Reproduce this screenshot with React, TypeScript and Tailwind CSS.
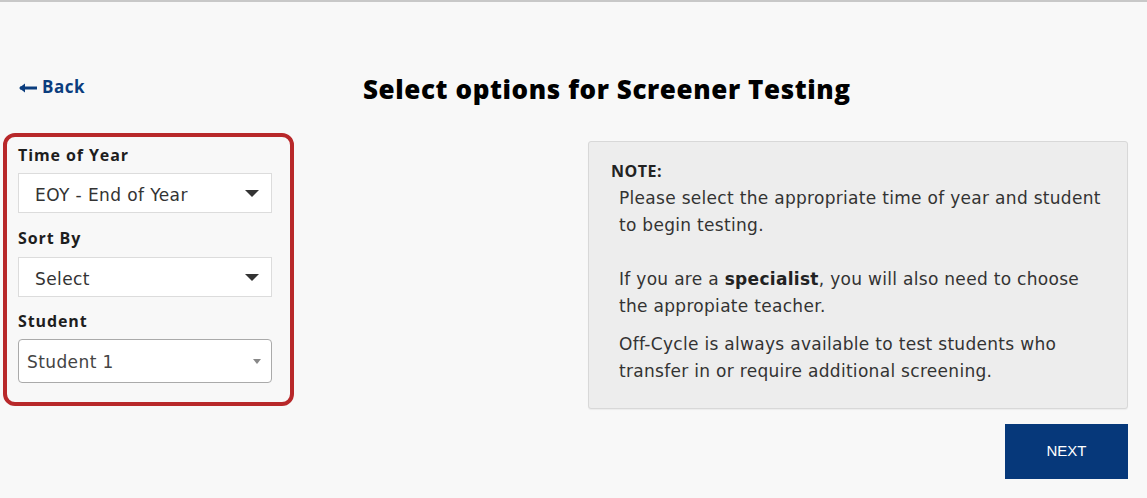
import React from "react";

const font = { fontFamily: '"Open Sans", "Noto Sans", sans-serif' };
const bodyFont = { fontFamily: '"DejaVu Sans", "Open Sans", sans-serif' };

function Caret({ small }: { small?: boolean }) {
  return small ? (
    <span className="block h-0 w-0 border-x-[4px] border-t-[5px] border-x-transparent border-t-[#888]" />
  ) : (
    <span className="block h-0 w-0 border-x-[7px] border-t-[7px] border-x-transparent border-t-[#333]" />
  );
}

export default function App() {
  return (
    <div
      className="flex h-[498px] w-[1147px] flex-col overflow-hidden border-t-2 border-[#c8c8c8] bg-[#f8f8f8] text-[#222]"
      style={font}
    >
      {/* header row */}
      <div className="mt-[68px] flex items-center">
        <a className="ml-[19px] -mt-[5px] flex w-[344px] items-center gap-[5px] text-[17px] font-bold tracking-[0.5px] text-[#0b3d7e]">
          <svg width="18" height="10" viewBox="0 0 18 10" className="mt-px">
            <path d="M1 5H18" stroke="#0b3d7e" strokeWidth="3" />
            <path d="M0 5L6 0.5V9.5Z" fill="#0b3d7e" />
          </svg>
          <span>Back</span>
        </a>
        <h1 className="text-[26px] font-extrabold tracking-[0.6px] text-black">
          Select options for Screener Testing
        </h1>
      </div>

      <div className="mt-[24px] flex items-start">
        {/* filter panel */}
        <div className="ml-[3px] flex w-[291px] flex-col rounded-[12px] border-[4px] border-[#b8282a] pl-[11px] pr-[18px] pt-[6px] pb-[19px]">
          <label className="text-[16px] font-bold leading-[24px] tracking-[0.9px] text-[#1e1e1e]">Time of Year</label>
          <div
            className="mt-[6px] flex h-[40px] items-center justify-between border border-[#dcdcdc] bg-white pl-[16px] pr-[12px] text-[17px] tracking-[0.4px] text-[#333]"
            style={bodyFont}
          >
            <span className="pt-[5px]">EOY - End of Year</span>
            <Caret />
          </div>
          <label className="mt-[13px] text-[16px] font-bold leading-[24px] tracking-[0.9px] text-[#1e1e1e]">Sort By</label>
          <div
            className="mt-[7px] flex h-[40px] items-center justify-between border border-[#dcdcdc] bg-white pl-[16px] pr-[12px] text-[17px] tracking-[0.4px] text-[#333]"
            style={bodyFont}
          >
            <span className="pt-[5px]">Select</span>
            <Caret />
          </div>
          <label className="mt-[12px] text-[16px] font-bold leading-[24px] tracking-[0.9px] text-[#1e1e1e]">Student</label>
          <div
            className="mt-[6px] flex h-[44px] items-center justify-between rounded-[4px] border border-[#aaa] bg-white pl-[8px] pr-[10px] text-[17px] tracking-[0.4px] text-[#444]"
            style={bodyFont}
          >
            <span className="pt-[4px]">Student 1</span>
            <Caret small />
          </div>
        </div>

        <div className="flex flex-1 flex-col items-end pr-[19px]">
          {/* note box */}
          <div className="mt-[8px] w-[540px] rounded-[3px] border border-[#d8d8d8] bg-[#ededed] pl-[22px] pr-[10px] pt-[17px] pb-[23px] text-[16px] text-[#333] shadow-[0_1px_1px_rgba(0,0,0,0.05)]">
            <div className="font-bold leading-[24px] tracking-[0.5px] text-[#222]">NOTE:</div>
            <div className="mt-[2px] pl-[8px] text-[17px] leading-[27px] tracking-[0.3px]" style={bodyFont}>
              <p>
                Please select the appropriate time of year and student
                <br />
                to begin testing.
              </p>
              <p className="mt-[27px]">
                If you are a <b className="text-[#222]">specialist</b>, you will also need to choose
                <br />
                the appropiate teacher.
              </p>
              <p className="mt-[11px]">
                Off-Cycle is always available to test students who
                <br />
                transfer in or require additional screening.
              </p>
            </div>
          </div>
          <button
            className="mt-[15px] h-[55px] w-[123px] bg-[#06387a] text-[15px] text-white"
            style={{ fontFamily: '"Liberation Sans", Arial, sans-serif' }}
          >
            NEXT
          </button>
        </div>
      </div>
    </div>
  );
}
